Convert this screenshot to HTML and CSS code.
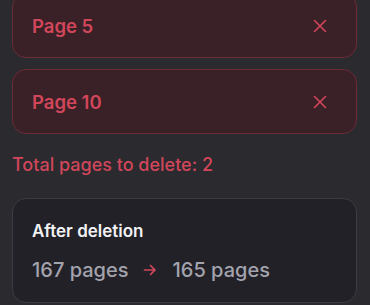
FILE: index.html
```html
<!DOCTYPE html>
<html>
<head>
<meta charset="utf-8">
<link rel="stylesheet" href="styles.css">
</head>
<body>
<div class="panel">
  <div class="list">
    <div class="item">
      <span class="item-label">Page 5</span>
      <svg class="remove" width="14" height="14" viewBox="0 0 14 14"><path d="M1.5 1.5 L12.5 12.5 M12.5 1.5 L1.5 12.5" stroke="currentColor" stroke-width="1.6" stroke-linecap="round" fill="none"/></svg>
    </div>
    <div class="item">
      <span class="item-label">Page 10</span>
      <svg class="remove" width="14" height="14" viewBox="0 0 14 14"><path d="M1.5 1.5 L12.5 12.5 M12.5 1.5 L1.5 12.5" stroke="currentColor" stroke-width="1.6" stroke-linecap="round" fill="none"/></svg>
    </div>
  </div>
  <div class="total">Total pages to delete: 2</div>
  <div class="summary">
    <div class="summary-title">After deletion</div>
    <div class="summary-counts">
      <span>167 pages</span>
      <svg class="arrow" width="14" height="14" viewBox="0 0 14 14"><path d="M1.5 7 H12 M7.5 2.5 L12 7 L7.5 11.5" stroke="currentColor" stroke-width="1.7" stroke-linecap="round" stroke-linejoin="round" fill="none"/></svg>
      <span>165 pages</span>
    </div>
  </div>
</div>
</body>
</html>
```
FILE: styles.css
```css
html, body {
  margin: 0;
  padding: 0;
  background: #2a2a2f;
  height: 100%;
  overflow: hidden;
}
body {
  font-family: Inter, "Noto Sans", sans-serif;
}
.panel {
  padding: 0 13px 0 12px;
  margin-top: -7px;
  display: flex;
  flex-direction: column;
}
.list {
  display: flex;
  flex-direction: column;
  gap: 11px;
}
.item {
  height: 63px;
  box-sizing: content-box;
  border: 1px solid #6b2b37;
  background: #3a2127;
  border-radius: 14px;
  display: flex;
  align-items: center;
  justify-content: space-between;
  padding: 0 29px 0 19px;
  color: #d1465a;
}
.item-label {
  font-size: 18.5px;
  font-weight: 600;
}
.remove {
  display: block;
}
.total {
  margin-top: 20px;
  font-size: 18px;
  font-weight: 500;
  color: #d1465a;
  line-height: 22px;
}
.summary {
  margin-top: 22px;
  border: 1px solid #3c3c44;
  background: #212127;
  border-radius: 14px;
  padding: 20px 19px 19px;
}
.summary-title {
  font-size: 17px;
  font-weight: 600;
  color: #f2f2f4;
  line-height: 24px;
}
.summary-counts {
  margin-top: 14px;
  display: flex;
  align-items: center;
  gap: 15px;
  font-size: 20px;
  font-weight: 500;
  color: #a3a3ad;
  line-height: 26px;
}
.arrow {
  color: #d1465a;
  display: block;
}
```
